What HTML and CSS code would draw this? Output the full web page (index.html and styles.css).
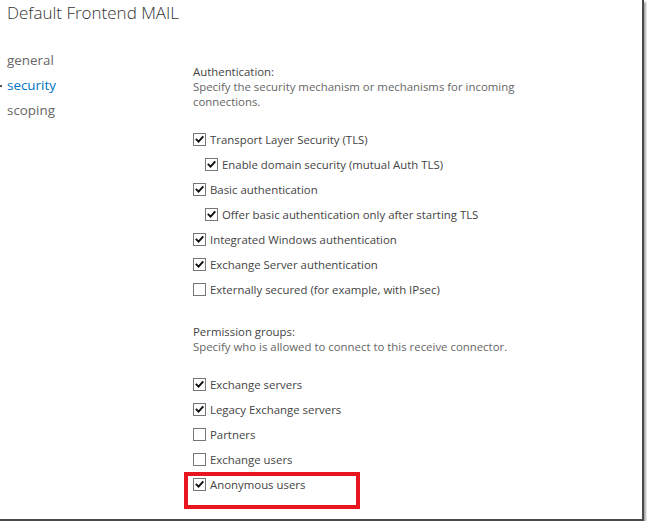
FILE: index.html
```html
<!DOCTYPE html>
<html>
<head>
<meta charset="utf-8">
<link rel="stylesheet" href="styles.css">
</head>
<body>
<div class="frame">
  <h1 class="title">Default Frontend MAIL</h1>
  <div class="main">
    <nav class="nav">
      <div class="nav-item">general</div>
      <div class="nav-item active">security</div>
      <div class="nav-item">scoping</div>
    </nav>
    <div class="content">
      <section class="group">
        <div class="heading">Authentication:</div>
        <div class="desc">Specify the security mechanism or mechanisms for incoming connections.</div>
        <ul class="checks">
          <li class="row"><span class="box checked"><svg viewBox="0 0 13 13"><path d="M3 6.6 L5.4 9 L10.2 3.6"/></svg></span>Transport Layer Security (TLS)</li>
          <li class="row sub"><span class="box checked"><svg viewBox="0 0 13 13"><path d="M3 6.6 L5.4 9 L10.2 3.6"/></svg></span>Enable domain security (mutual Auth TLS)</li>
          <li class="row"><span class="box checked"><svg viewBox="0 0 13 13"><path d="M3 6.6 L5.4 9 L10.2 3.6"/></svg></span>Basic authentication</li>
          <li class="row sub"><span class="box checked"><svg viewBox="0 0 13 13"><path d="M3 6.6 L5.4 9 L10.2 3.6"/></svg></span>Offer basic authentication only after starting TLS</li>
          <li class="row"><span class="box checked"><svg viewBox="0 0 13 13"><path d="M3 6.6 L5.4 9 L10.2 3.6"/></svg></span>Integrated Windows authentication</li>
          <li class="row"><span class="box checked"><svg viewBox="0 0 13 13"><path d="M3 6.6 L5.4 9 L10.2 3.6"/></svg></span>Exchange Server authentication</li>
          <li class="row"><span class="box"></span>Externally secured (for example, with IPsec)</li>
        </ul>
      </section>
      <section class="group second">
        <div class="heading">Permission groups:</div>
        <div class="desc">Specify who is allowed to connect to this receive connector.</div>
        <ul class="checks">
          <li class="row"><span class="box checked"><svg viewBox="0 0 13 13"><path d="M3 6.6 L5.4 9 L10.2 3.6"/></svg></span>Exchange servers</li>
          <li class="row"><span class="box checked"><svg viewBox="0 0 13 13"><path d="M3 6.6 L5.4 9 L10.2 3.6"/></svg></span>Legacy Exchange servers</li>
          <li class="row"><span class="box"></span>Partners</li>
          <li class="row"><span class="box"></span>Exchange users</li>
          <li class="row highlighted"><span class="box checked"><svg viewBox="0 0 13 13"><path d="M3 6.6 L5.4 9 L10.2 3.6"/></svg></span>Anonymous users<span class="mark"></span></li>
        </ul>
      </section>
    </div>
  </div>
</div>
</body>
</html>
```
FILE: styles.css
```css
html, body {
  margin: 0;
  padding: 0;
  background: #ffffff;
}
body {
  font-family: "Open Sans", "Noto Sans", sans-serif;
  color: #333;
}
.frame {
  width: 642px;
  height: 519px;
  border-right: 2px solid #4a4a4a;
  border-bottom: 2px solid #4a4a4a;
  box-shadow: 2px 2px 2px rgba(0,0,0,0.35);
  background: #fff;
  overflow: hidden;
}
.title {
  margin: 0;
  padding: 0 7px;
  font-size: 17px;
  font-weight: 300;
  line-height: 26px;
  color: #333;
}
.main {
  display: flex;
  margin-top: 22px;
}
.nav {
  width: 193px;
  flex: none;
}
.nav-item {
  position: relative;
  padding-left: 7px;
  font-size: 13.4px;
  line-height: 25px;
  color: #666;
}
.nav-item.active {
  color: #0072c6;
}
.nav-item.active::before {
  content: "";
  position: absolute;
  left: 0;
  top: 12px;
  width: 2px;
  height: 2px;
  background: #555;
}
.content {
  padding-top: 16px;
  font-size: 11.4px;
  line-height: 15px;
}
.heading {
  color: #444;
}
.desc {
  color: #666;
  width: 340px;
}
.checks {
  list-style: none;
  margin: 18px 0 0 0;
  padding: 0;
}
.group.second {
  margin-top: 22px;
}
.row {
  position: relative;
  display: flex;
  align-items: center;
  height: 25px;
  color: #444;
}
.row.sub {
  padding-left: 12px;
}
.box {
  width: 11px;
  height: 11px;
  border: 1px solid #777;
  background: #fff;
  margin-right: 4px;
  flex: none;
  display: flex;
}
.box svg {
  width: 11px;
  height: 11px;
}
.box svg path {
  fill: none;
  stroke: #111;
  stroke-width: 2.3;
  stroke-linecap: square;
}
.mark {
  position: absolute;
  left: -9px;
  top: 0;
  width: 168px;
  height: 29px;
  border: 4px solid #e8141e;
}
```
